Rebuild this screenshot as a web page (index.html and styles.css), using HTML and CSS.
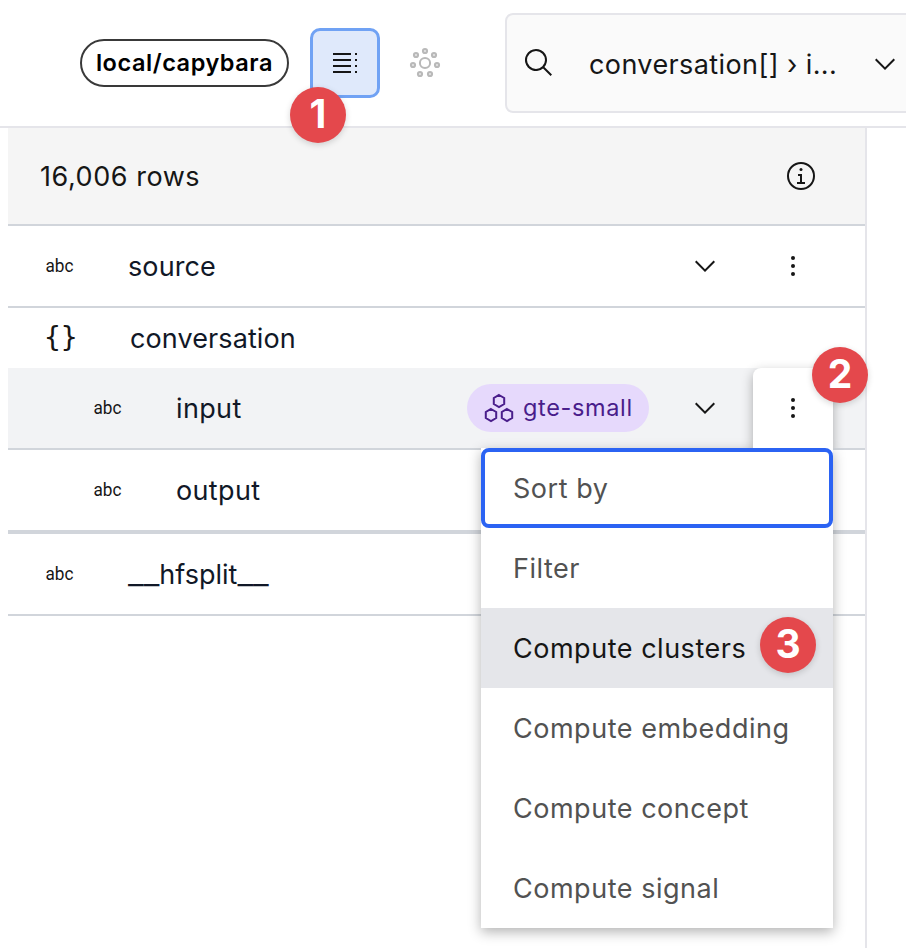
FILE: index.html
```html
<!DOCTYPE html>
<html lang="en">
<head>
<meta charset="utf-8">
<title>local/capybara</title>
<link rel="stylesheet" href="styles.css">
</head>
<body>
<svg class="defs" aria-hidden="true">
  <symbol id="chevron" viewBox="0 0 32 32"><path d="M16 22L6 12 7.4 10.6 16 19.2 24.6 10.6 26 12z"/></symbol>
  <symbol id="kebab" viewBox="0 0 32 32"><circle cx="16" cy="8" r="2"/><circle cx="16" cy="16" r="2"/><circle cx="16" cy="24" r="2"/></symbol>
  <symbol id="search" viewBox="0 0 32 32"><path d="M29 27.586l-7.552-7.552a11.018 11.018 0 1 0-1.414 1.414L27.586 29zM4 13a9 9 0 1 1 9 9 9.01 9.01 0 0 1-9-9z"/></symbol>
  <symbol id="info" viewBox="0 0 32 32"><circle cx="16" cy="16" r="13" fill="none" stroke="currentColor" stroke-width="2"/><path d="M17 22v-8h-4v2h2v6h-3v2h8v-2z"/><circle cx="16" cy="9.5" r="1.5"/></symbol>
</svg>
<header class="topbar">
  <a class="dataset">local/capybara</a>
  <button class="view active" aria-label="Schema">
    <svg width="32" height="32" viewBox="0 0 32 32"><path d="M4 6h18v2H4zm0 6h18v2H4zm0 6h18v2H4zm0 6h18v2H4zM26 6h2v2h-2zm0 6h2v2h-2zm0 6h2v2h-2zm0 6h2v2h-2z"/></svg>
    <span class="badge badge-one">1</span>
  </button>
  <button class="view muted" aria-label="Clusters">
    <svg class="cluster-icon" width="32" height="32" viewBox="0 0 32 32"><circle cx="16" cy="16" r="5.1" fill="none"/><circle cx="16" cy="4" r="2.1"/><circle cx="25" cy="8" r="2.1"/><circle cx="28" cy="18" r="2.1"/><circle cx="21" cy="27" r="2.1"/><circle cx="11" cy="27" r="2.1"/><circle cx="4" cy="18" r="2.1"/><circle cx="7" cy="8" r="2.1"/></svg>
  </button>
  <div class="searchbox">
    <svg class="icon"><use href="#search"/></svg>
    <span class="search-field">conversation[] › i...</span>
    <svg class="icon search-chevron"><use href="#chevron"/></svg>
  </div>
</header>
<main class="schema">
  <div class="summary"><span class="count">16,006 rows</span><svg class="icon"><use href="#info"/></svg></div>
  <div class="row">
    <span class="type"><svg class="icon"><text class="abc" x="1.5" y="22" textLength="28" lengthAdjust="spacingAndGlyphs">abc</text></svg></span>
    <span class="name">source</span>
    <svg class="icon"><use href="#chevron"/></svg>
    <button class="more" aria-label="More"><svg class="icon"><use href="#kebab"/></svg></button>
  </div>
  <div class="row parent">
    <span class="type braces">{}</span>
    <span class="name">conversation</span>
  </div>
  <div class="row child hovered">
    <span class="type"><svg class="icon"><text class="abc" x="1.5" y="22" textLength="28" lengthAdjust="spacingAndGlyphs">abc</text></svg></span>
    <span class="name">input</span>
    <span class="chip"><svg class="hexagons" width="32" height="32" viewBox="0 0 32 32"><path d="M16 3l5.200 3v6L16 15l-5.200-3V6zM8 17l5.200 3v6L8 29l-5.200-3v-6zM24 17l5.200 3v6L24 29l-5.200-3v-6z"/></svg><span class="chip-text">gte-small</span></span>
    <svg class="icon"><use href="#chevron"/></svg>
    <button class="more open" aria-label="More"><svg class="icon"><use href="#kebab"/></svg><span class="badge badge-two">2</span></button>
    <ul class="menu">
      <li class="item focused">Sort by</li>
      <li class="item">Filter</li>
      <li class="item current">Compute clusters<span class="badge badge-three">3</span></li>
      <li class="item">Compute embedding</li>
      <li class="item">Compute concept</li>
      <li class="item">Compute signal</li>
    </ul>
  </div>
  <div class="row child last-child">
    <span class="type"><svg class="icon"><text class="abc" x="1.5" y="22" textLength="28" lengthAdjust="spacingAndGlyphs">abc</text></svg></span>
    <span class="name">output</span>
  </div>
  <div class="row">
    <span class="type"><svg class="icon"><text class="abc" x="1.5" y="22" textLength="28" lengthAdjust="spacingAndGlyphs">abc</text></svg></span>
    <span class="name tight"><span class="wide">__</span>hfsplit<span class="wide">__</span></span>
  </div>
</main>
</body>
</html>
```
FILE: styles.css
```css
* { box-sizing: border-box; }
body {
  margin: 0;
  height: 948px;
  overflow: hidden;
  display: flex;
  flex-direction: column;
  background: #fff;
  color: #161616;
  font: 400 27px/40px Inter, sans-serif;
}
button { padding: 0; border: 0; background: none; color: inherit; font: inherit; }
svg { display: block; flex: none; fill: currentColor; }
.defs { position: absolute; width: 0; height: 0; }
.icon { width: 32px; height: 32px; }

.topbar {
  flex: none;
  display: flex;
  align-items: center;
  height: 128px;
  padding-left: 80px;
  border-bottom: 2px solid #e5e5ea;
}
.dataset {
  flex: none;
  width: 209px;
  height: 48px;
  border: 2px solid #393939;
  border-radius: 24px;
  color: #000;
  font-size: 23.5px;
  font-weight: 600;
  line-height: 43px;
  letter-spacing: 0.55px;
  text-align: center;
}
.view {
  position: relative;
  flex: none;
  display: flex;
  align-items: center;
  justify-content: center;
  width: 70px;
  height: 70px;
  margin-left: 21px;
  border: 3px solid transparent;
  border-radius: 10px;
}
.view.active { background: #dfe9fb; border-color: #70a2f4; }
.view.muted { margin-left: 10px; }
.cluster-icon { fill: #e4e4e4; stroke: #b9b9b9; stroke-width: 2; }
.searchbox {
  flex: none;
  display: flex;
  align-items: center;
  width: 420px;
  height: 100px;
  margin-left: 45px;
  padding-left: 16px;
  border: 2px solid #e5e5ea;
  border-radius: 8px;
  background: #fafafa;
}
.search-field { width: 282px; margin: 4px 0 0 34px; letter-spacing: 0.4px; white-space: nowrap; }
.search-chevron { margin-left: -2px; margin-top: 2px; }

.schema {
  flex: 1;
  width: 859px;
  margin-left: 8px;
  border-right: 2px solid #e5e5ea;
}
.summary {
  display: flex;
  align-items: center;
  justify-content: space-between;
  height: 98px;
  padding: 0 48px 0 32px;
  border-bottom: 2px solid #d1d5db;
  background: #f5f5f5;
}
.count { padding-top: 2px; letter-spacing: 0.55px; }
.row {
  position: relative;
  display: flex;
  align-items: center;
  height: 82px;
  padding: 0 32px 0 36px;
  border-bottom: 2px solid #d1d5db;
}
.row.parent { height: 60px; border: 0; }
.row.child { padding-left: 84px; }
.row.hovered { background: #f2f3f5; }
.row.last-child { height: 84px; border-bottom-width: 4px; }
.type { flex: none; width: 84px; }
.abc { font: 400 19px Roboto, sans-serif; }
.braces { width: 86px; font: 28px/40px "DejaVu Sans Mono", monospace; }
.name { flex: 1; padding-top: 1px; color: #111827; letter-spacing: 0.1px; }
.child .name { letter-spacing: 0.35px; }
.name.tight { letter-spacing: 0; }
.wide { font-size: 35px; font-weight: 300; line-height: 1; }
.chip {
  display: flex;
  align-items: center;
  width: 182px;
  height: 48px;
  margin-right: 40px;
  padding-left: 16px;
  border-radius: 24px;
  background: #e6d9fc;
  color: #491d8b;
}
.hexagons { fill: none; stroke: currentColor; stroke-width: 2; }
.chip-text { margin-left: 8px; font-size: 23.5px; letter-spacing: 0.65px; }
.more {
  position: relative;
  display: flex;
  align-items: center;
  justify-content: center;
  width: 80px;
  height: 80px;
  margin-left: 32px;
}
.more.open { z-index: 2; border-radius: 8px 8px 0 0; background: #fff; box-shadow: 0 4px 12px rgba(0, 0, 0, .3); clip-path: inset(-30px -60px 0 -20px); }
.menu {
  position: absolute;
  z-index: 1;
  top: 80px;
  right: 32px;
  width: 352px;
  margin: 0;
  padding: 0;
  background: #fff;
  box-shadow: 0 4px 12px rgba(0, 0, 0, .3);
  color: #525252;
  letter-spacing: 0.52px;
  list-style: none;
}
.item { position: relative; display: flex; align-items: center; height: 80px; padding: 1px 0 0 32px; }
.item.focused { border: 4px solid #2b63f3; border-radius: 8px; padding-left: 28px; }
.item.current { background: #e5e6ea; color: #161616; }

.badge {
  position: absolute;
  z-index: 3;
  width: 56px;
  height: 56px;
  border-radius: 50%;
  background: #e4484c;
  box-shadow: 0 2px 6px rgba(0, 0, 0, .16);
  color: #fff;
  font-size: 39px;
  font-weight: 700;
  line-height: 54px;
  letter-spacing: 0;
  text-align: center;
}
.badge-one { left: -23px; top: 56px; }
.badge-two { left: 59px; top: -21px; }
.badge-three { right: 17px; top: 9px; }
```
